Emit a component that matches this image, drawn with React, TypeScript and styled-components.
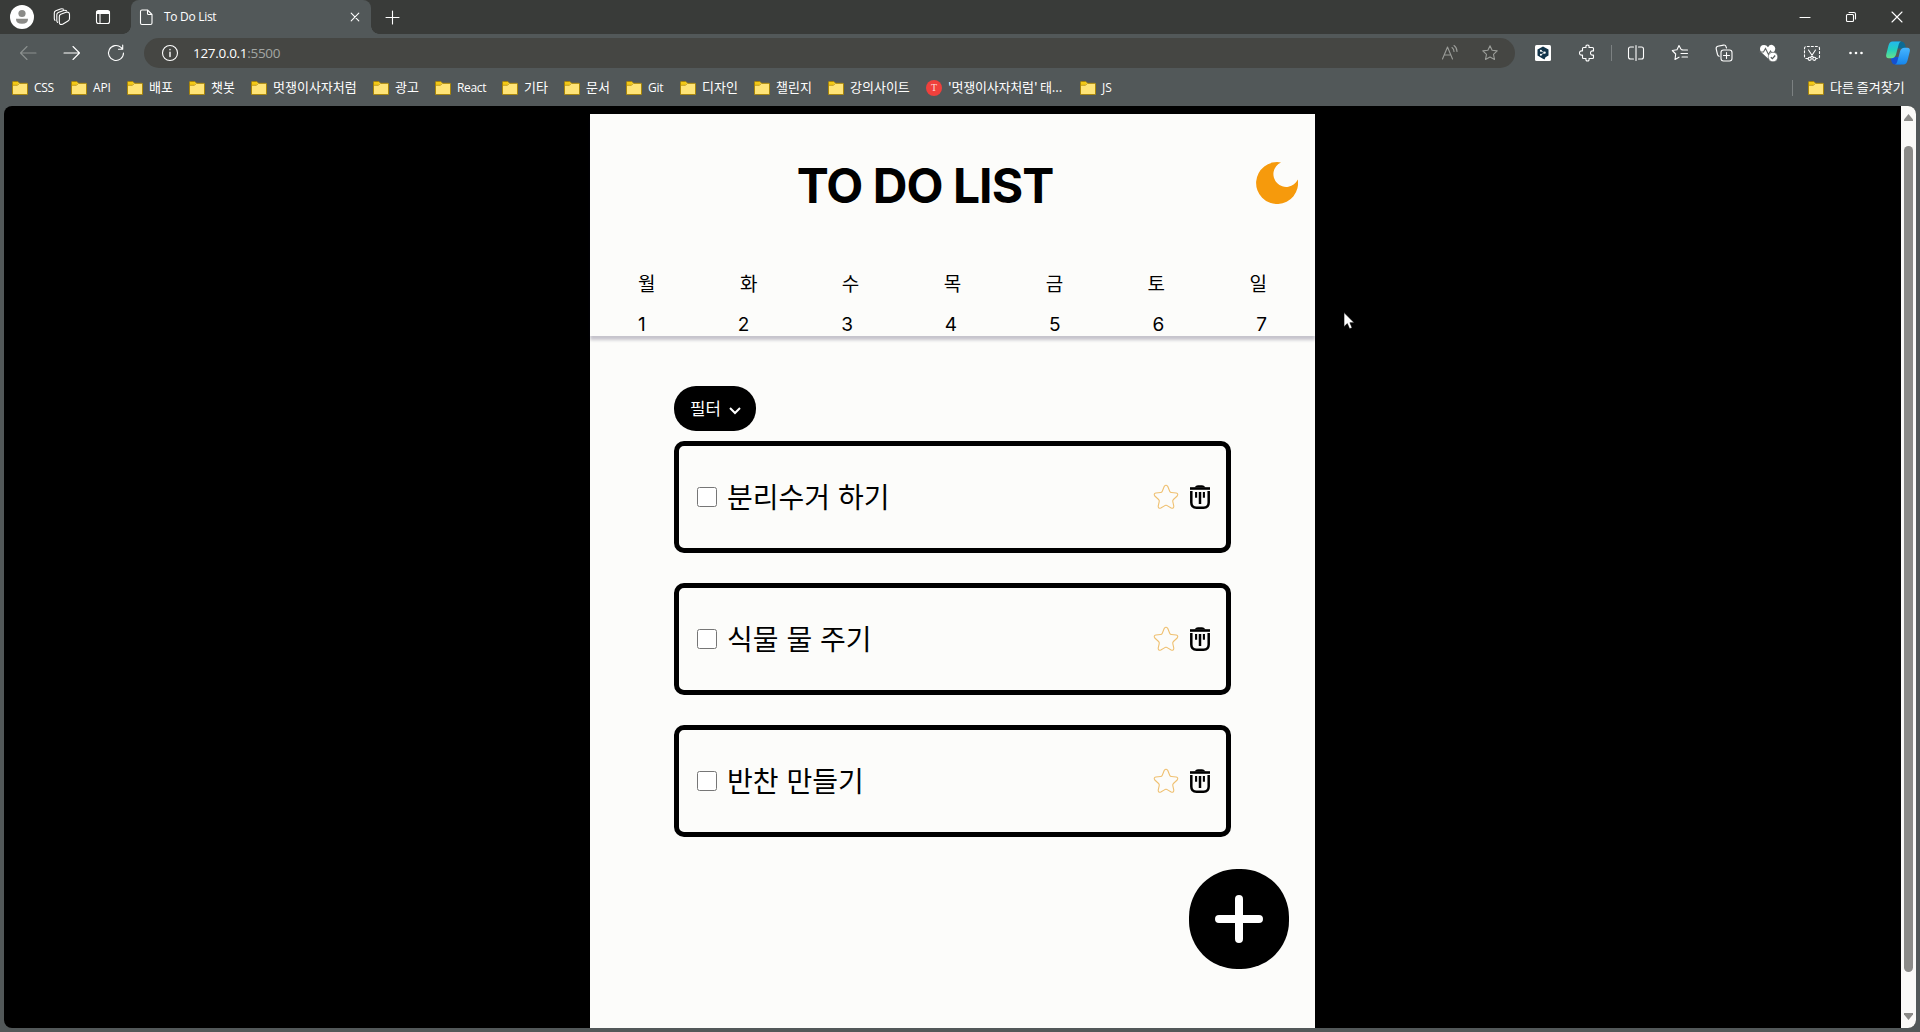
import React from "react";
import styled, { createGlobalStyle } from "styled-components";

const FRAME = "#525859";
const STRIP = "#393b39";
const UI_FONT = `"Open Sans", "Noto Sans CJK KR", sans-serif`;
const PAGE_FONT = `Inter, "Noto Sans CJK KR", sans-serif`;

const GlobalStyle = createGlobalStyle`
  *, *::before, *::after { box-sizing: border-box; }
  html, body, #root { height: 100%; margin: 0; }
  body { overflow: hidden; background: ${FRAME}; }
  ul { list-style: none; margin: 0; padding: 0; }
  button { font: inherit; border: 0; padding: 0; background: none; color: inherit; }
`;

/* ---------- browser frame ---------- */

const Browser = styled.div`
  display: flex;
  flex-direction: column;
  width: 1920px;
  height: 1032px;
  background: ${FRAME};
  color: #fff;
  font-family: ${UI_FONT};
`;

const TabStrip = styled.header`
  display: flex;
  flex: none;
  height: 34px;
  padding-left: 1px;
  background: ${STRIP};
`;

const Slot = styled.div<{ $w?: number }>`
  display: flex;
  flex: none;
  align-items: center;
  justify-content: center;
  width: ${(p) => p.$w ?? 44}px;
  height: 100%;
`;

const Spacer = styled.div`
  flex: 1;
`;

const Tab = styled.div`
  position: relative;
  display: flex;
  align-items: center;
  width: 240px;
  margin-left: 6px;
  padding: 0 11px 0 7px;
  border-radius: 8px 8px 0 0;
  background: ${FRAME};
  font-size: 12px;

  &::before,
  &::after {
    content: "";
    position: absolute;
    bottom: 0;
    width: 8px;
    height: 8px;
  }
  &::before {
    left: -8px;
    background: radial-gradient(circle at 0 0, transparent 7.5px, ${FRAME} 8px);
  }
  &::after {
    right: -8px;
    background: radial-gradient(circle at 100% 0, transparent 7.5px, ${FRAME} 8px);
  }
`;

const TabTitle = styled.span`
  flex: 1;
  margin-left: 9px;
  line-height: 16px;
  letter-spacing: -0.3px;
`;

const Icon = styled.svg<{ $s?: number; $c?: string }>`
  flex: none;
  display: block;
  width: ${(p) => p.$s ?? 18}px;
  height: ${(p) => p.$s ?? 18}px;
  fill: none;
  stroke: ${(p) => p.$c ?? "#fff"};
  stroke-width: 1.1;
  stroke-linecap: round;
  stroke-linejoin: round;
`;

const Toolbar = styled.div`
  display: flex;
  flex: none;
  align-items: center;
  height: 38px;
  padding-left: 6px;
`;

const AddressBar = styled.div`
  display: flex;
  align-items: center;
  width: 1371px;
  height: 30px;
  margin: 0 6px;
  padding: 0 16px 0 17px;
  border-radius: 15px;
  background: #454643;
`;

const Url = styled.span`
  flex: 1;
  margin-left: 14px;
  font-size: 13.5px;
  line-height: 18px;
  letter-spacing: -0.3px;
`;

const Port = styled.span`
  color: #a3a6a3;
`;

const AddressActions = styled.div`
  display: flex;
  gap: 22px;
`;

const Rule = styled.div`
  width: 1px;
  height: 16px;
  margin: 0 2px;
  background: #7c8182;
`;

const Bookmarks = styled.nav`
  display: flex;
  flex: none;
  align-items: center;
  height: 34px;
  padding: 0 15px 2px 12px;
`;

const Bookmark = styled.div<{ $w?: number }>`
  display: flex;
  align-items: center;
  gap: 6px;
  flex: none;
  width: ${(p) => (p.$w ? p.$w + "px" : "auto")};
  font-size: 12px;
  line-height: 16px;
  white-space: nowrap;
`;

const OtherBookmarks = styled(Bookmark)`
  margin: 0 -1px 0 13px;
`;

const BookmarkText = styled.span<{ $ko?: boolean; $track?: number }>`
  padding-bottom: ${(p) => (p.$ko ? 2 : 0)}px;
  font-family: ${(p) => (p.$ko ? `"Noto Sans CJK KR", sans-serif` : UI_FONT)};
  font-size: ${(p) => (p.$ko ? 13 : 12)}px;
  letter-spacing: ${(p) => p.$track ?? 0}px;
`;

const RedBadge = styled.span`
  display: grid;
  place-items: center;
  width: 16px;
  height: 16px;
  border-radius: 50%;
  background: #f0403c;
  color: #ffd9d6;
  font: 10px/1 "Liberation Serif", serif;
`;

/* ---------- viewport ---------- */

const Viewport = styled.div`
  display: flex;
  width: 1912px;
  height: 922px;
  margin-left: 4px;
  border-radius: 8px;
  overflow: hidden;
  background: #000;
`;

const Page = styled.main`
  display: flex;
  justify-content: center;
  width: 1897px;
  padding-top: 8px;
  font-family: ${PAGE_FONT};
`;

const Panel = styled.section`
  width: 725px;
  height: 914px;
  background: #fcfcfa;
  color: #000;
`;

const PanelHeader = styled.header`
  display: flex;
  flex-direction: column;
  height: 222px;
  box-shadow: 0 4px 3px rgba(20, 15, 50, 0.23);
`;

const TitleRow = styled.div`
  display: grid;
  flex: none;
  grid-template-columns: 1fr auto 1fr;
  align-items: center;
  height: 144px;
  padding: 0 17px 0 0;
`;

const Title = styled.h1`
  grid-column: 2;
  margin: 0 38px 0 0;
  font-size: 48px;
  font-weight: 700;
  line-height: 58px;
  letter-spacing: -0.95px;
  white-space: nowrap;
`;

const MoonButton = styled.button`
  justify-self: end;
  margin-top: -6px;
`;

const WeekRow = styled.div<{ $h: number }>`
  display: flex;
  flex: none;
  justify-content: space-between;
  align-items: center;
  height: ${(p) => p.$h}px;
  padding: 0 48px;
  font-size: 19px;
  line-height: 24px;
`;

const Content = styled.div`
  display: flex;
  flex-direction: column;
  align-items: flex-start;
  padding: 50px 84px 0;
`;

const FilterButton = styled.button`
  display: flex;
  align-items: center;
  gap: 8px;
  width: 82px;
  height: 45px;
  padding: 0 0 1px 16px;
  border-radius: 22px;
  background: #000;
  color: #fff;
  font-size: 16.8px;
`;

const Chevron = styled.svg`
  width: 12px;
  height: 8px;
  margin-top: 5px;
`;

const TodoList = styled.ul`
  display: flex;
  flex-direction: column;
  gap: 30px;
  margin-top: 10px;
`;

const TodoCard = styled.li`
  display: flex;
  align-items: center;
  width: 557px;
  height: 112px;
  padding: 0 16px 0 18px;
  border: 5px solid #000;
  border-radius: 10px;
`;

const Check = styled.input.attrs({ type: "checkbox" })`
  appearance: none;
  width: 20px;
  height: 20px;
  margin: 0 10px 0 0;
  border: 1px solid #767676;
  border-radius: 2.5px;
  background: #fff;
`;

const TodoText = styled.span`
  flex: 1;
  padding-top: 2px;
  font-size: 28px;
  line-height: 36px;
`;

const CardActions = styled.div`
  display: flex;
  align-items: center;
  gap: 11px;
`;

const AddRow = styled.div`
  display: flex;
  justify-content: flex-end;
  padding: 31px 26px 0 0;
`;

const AddButton = styled.button`
  display: grid;
  place-items: center;
  width: 100px;
  height: 100px;
  margin-top: 1px;
  border-radius: 48px;
  background: #000;
`;

const Scrollbar = styled.div`
  display: flex;
  flex-direction: column;
  align-items: center;
  width: 15px;
  padding: 8px 0;
  background: #fafaf8;
`;

const Thumb = styled.div`
  width: 9px;
  height: 826px;
  margin: 25px 0 41px;
  border-radius: 5px;
  background: #8b8b88;
`;

const Pointer = styled.svg`
  position: absolute;
  left: 1343px;
  top: 311px;
  width: 13px;
  height: 19px;
`;

/* ---------- drawings ---------- */

const Folder = () => (
  <svg width="16" height="14" viewBox="0 0 16 14">
    <path d="M.5 1.2Q.5.5 1.2.5h4.6L7.6 2.3h7.2q.7 0 .7.7v10q0 .6-.7.6H1.2q-.7 0-.7-.6z" fill="#ffe477" stroke="#a98508" />
    <path d="M1 1h4.600l1.200 1.400L5.300 4H1z" fill="#f3c915" />
    <path d="M1 4.300h4.500l1.700-1.700" fill="none" stroke="#b58e0a" strokeWidth=".8" />
  </svg>
);

const STAR = "M9 1.7 11.1 6.3 16.2 6.9 12.5 10.4 13.5 15.5 9 13 4.5 15.5 5.5 10.4 1.8 6.9 6.9 6.3z";

const TrashIcon = () => (
  <svg width="20" height="24" viewBox="0 0 20 24" fill="none" stroke="#000">
    <path d="M0 3.500h20" strokeWidth="2.600" />
    <path d="M4.500 2.600Q6 .2 8 .2h4q2 0 3.500 2.400z" fill="#000" stroke="none" />
    <path d="M1.300 6v11.500q0 5.200 5.200 5.200h7q5.200 0 5.200-5.200V6" strokeWidth="2.500" />
    <path d="M6.100 7v5.800M13.900 7v5.800" strokeWidth="2.100" />
    <path d="M10 7v12" strokeWidth="2.500" />
  </svg>
);

const TodoStar = () => (
  <svg width="26" height="26" viewBox="0 0 26 26" fill="none" stroke="#efc070" strokeWidth="1.100" strokeLinejoin="round">
    <path d="M11.3 2.3Q13 .2 14.7 2.3L16.7 7.2Q17.2 8.4 18.5 8.5L23.2 9Q25.7 9.8 24.2 12L20.4 15.5Q19.5 16.3 19.8 17.6L20.8 22.2Q20.8 24.8 18.2 24L14.1 21.6Q13 21 11.9 21.6L7.8 24Q5.2 24.8 5.2 22.2L6.2 17.6Q6.5 16.3 5.6 15.5L1.8 12Q.3 9.8 2.8 9L7.5 8.5Q8.8 8.4 9.3 7.2z" />
  </svg>
);

const ProfileIcon = () => (
  <svg width="24" height="24" viewBox="0 0 24 24">
    <circle cx="12" cy="12" r="12" fill="#fff" />
    <circle cx="12" cy="8.5" r="3.6" fill="#8b8b88" />
    <path d="M6 13.800h12q.3 5-6 5t-6-5z" fill="#8b8b88" />
  </svg>
);

const Copilot = () => (
  <svg width="26" height="26" viewBox="0 0 26 26">
    <defs>
      <linearGradient id="cpl" x1="0" y1="0" x2="0" y2="1">
        <stop offset="0" stopColor="#22b8f0" />
        <stop offset=".5" stopColor="#23d0bd" />
        <stop offset="1" stopColor="#6ae08a" />
      </linearGradient>
      <linearGradient id="cpr" x1="0" y1="0" x2="0" y2="1">
        <stop offset="0" stopColor="#46b5ff" />
        <stop offset="1" stopColor="#1686ec" />
      </linearGradient>
    </defs>
    <path d="M10 1.500h6.500q2.600 0 3.400 2.800L21 8.500h-8z" fill="#0c6a94" />
    <path d="M16 24.500H10q-2.600 0-3.300-2.600L5.500 17h8z" fill="#1550d0" />
    <path d="M7.500 1.500H16q-1.800.6-2.300 3L11 14.500Q10 18.200 6.500 18.200H3.700Q.5 18.200 1.200 14.500L3.500 5.500Q4.500 1.500 7.500 1.500z" fill="url(#cpl)" />
    <path d="M18.500 24.500H10q1.800-.6 2.300-3L15 11.500Q16 7.800 19.500 7.800h2.800q3.200 0 2.500 3.700L22.500 20.500Q21.500 24.500 18.500 24.500z" fill="url(#cpr)" />
  </svg>
);

const folders: { name: string; w: number; ko?: boolean; track?: number }[] = [
  { name: "CSS", w: 59, track: -0.3 },
  { name: "API", w: 56, track: -0.1 },
  { name: "배포", w: 62, ko: true },
  { name: "챗봇", w: 62, ko: true },
  { name: "멋쟁이사자처럼", w: 122, ko: true },
  { name: "광고", w: 62, ko: true },
  { name: "React", w: 67, track: -0.35 },
  { name: "기타", w: 62, ko: true },
  { name: "문서", w: 62, ko: true },
  { name: "Git", w: 54, track: -0.2 },
  { name: "디자인", w: 74, ko: true },
  { name: "챌린지", w: 74, ko: true },
  { name: "강의사이트", w: 98, ko: true },
];

const days = ["월", "화", "수", "목", "금", "토", "일"];
const todos = ["분리수거 하기", "식물 물 주기", "반찬 만들기"];

export default function App() {
  return (
    <Browser>
      <GlobalStyle />
      <TabStrip>
        <Slot $w={42}><ProfileIcon /></Slot>
        <Slot $w={38}>
          <Icon viewBox="0 0 18 18">
            <path d="M7.800 6.300 13 4.300Q16.500 3.500 16.500 6.500V10.500Q16.500 12.300 15 13L10 16Q6.500 17.500 6.300 14.500V8.500Q6.300 7 7.800 6.300z" />
            <path d="M4.500 14.300Q3.800 13.500 3.800 12.500V6.800Q3.800 5.200 5.300 4.500L10.500 2.500Q12.500 2 13.500 2.800M2 12.300Q1.300 11.500 1.300 10.500V5Q1.300 3.500 2.800 2.800L7.500 1Q9.500.5 10.500 1.200" />
          </Icon>
        </Slot>
        <Slot $w={44}>
          <Icon $s={16} viewBox="0 0 16 16">
            <rect x="1.500" y="1.500" width="13" height="13" rx="2" />
            <path d="M5 4v10" />
            <path d="M2 2.500h12v2H2z" fill="#fff" />
          </Icon>
        </Slot>
        <Tab>
          <Icon $s={17} viewBox="0 0 17 17">
            <path d="M4 1h5.500L14 5.500V14q0 1.500-1.500 1.500H4Q2.500 15.500 2.500 14V2.500Q2.500 1 4 1zM9.500 1v3.500q0 1 1 1H14" />
          </Icon>
          <TabTitle>To Do List</TabTitle>
          <Icon $s={10} viewBox="0 0 10 10"><path d="M1.200 1.200 8.800 8.800M8.800 1.200 1.200 8.800" /></Icon>
        </Tab>
        <Slot $w={43}>
          <Icon $s={15} viewBox="0 0 15 15"><path d="M7.500 1v13M1 7.500h13" /></Icon>
        </Slot>
        <Spacer />
        <Slot $w={46}><Icon $s={12} viewBox="0 0 12 12"><path d="M1 6.500h10" /></Icon></Slot>
        <Slot $w={46}>
          <Icon $s={12} viewBox="0 0 12 12">
            <rect x="1.500" y="3.500" width="7" height="7" rx="1" />
            <path d="M4 1.500h5q1.500 0 1.500 1.500v5" />
          </Icon>
        </Slot>
        <Slot $w={46}><Icon $s={12} viewBox="0 0 12 12"><path d="m1 1 10 10M11 1 1 11" /></Icon></Slot>
      </TabStrip>

      <Toolbar>
        <Slot><Icon $c="#8b908f" viewBox="0 0 18 18"><path d="M17 9H1.500M8 2.500 1.500 9 8 15.500" /></Icon></Slot>
        <Slot><Icon viewBox="0 0 18 18"><path d="M1 9h15.500M10 2.500 16.500 9 10 15.500" /></Icon></Slot>
        <Slot><Icon viewBox="0 0 18 18"><path d="M16.500 9A7.500 7.500 0 1 1 14 3.400L15.500 5M15.700 1v4.200h-4.200" /></Icon></Slot>
        <AddressBar>
          <Icon viewBox="0 0 18 18">
            <circle cx="9" cy="9" r="7.500" />
            <path d="M9 8.200V12.500M9 5.500v.2" strokeWidth="1.400" />
          </Icon>
          <Url>127.0.0.1<Port>:5500</Port></Url>
          <AddressActions>
            <Icon $c="#9a9c98" viewBox="0 0 18 18">
              <path d="M1.500 15 6.500 3l5 12M3.300 11h6.400M11 3.500q2 1.500 2 4M13 1.500q3 2 3 6" />
            </Icon>
            <Icon $c="#9a9c98" viewBox="0 0 18 18"><path d={STAR} /></Icon>
          </AddressActions>
        </AddressBar>
        <Slot>
          <svg width="16" height="16" viewBox="0 0 16 16">
            <rect width="16" height="16" rx="1.500" fill="#fff" />
            <path d="M8 1.500 13.500 4.500v6L10.500 12.300 9.500 14.500 7.500 13.400 2.500 10.500v-6z" fill="#12344a" />
            <path d="M5.800 5.800 9.500 7.700 5.800 9.800" fill="none" stroke="#fff" strokeWidth=".7" />
            <g fill="#fff"><circle cx="5.900" cy="5.700" r="1" /><circle cx="9.700" cy="7.700" r="1.100" /><circle cx="5.900" cy="9.800" r="1" /></g>
          </svg>
        </Slot>
        <Slot>
          <Icon viewBox="0 0 18 18">
            <path d="M5.500 3.500H8Q7.500 1 9.500 1T11 3.500h3.500q1 0 1 1V7q-3-.5-3 2t3 2v2.500q0 1-1 1H11Q11.500 17 9.500 17T8 14.500H5.500q-1 0-1-1V11Q1.500 11.500 1.500 9t3-2V4.500q0-1 1-1z" />
          </Icon>
        </Slot>
        <Rule />
        <Slot>
          <Icon viewBox="0 0 18 18">
            <path d="M9 1.500v15M6.500 3H3.500Q1.500 3 1.500 5v8q0 2 2 2h3M11.500 3h3q2 0 2 2v8q0 2-2 2h-3" />
          </Icon>
        </Slot>
        <Slot>
          <Icon viewBox="0 0 18 18">
            <path d="M11 5.500 10 5.300 8 1.500 6 5.800 1.300 6.500 4.700 10 4 15.500 8 13.200M11 6h5.500M10 9.500h6.500M11 13h5.500" />
          </Icon>
        </Slot>
        <Slot>
          <Icon viewBox="0 0 18 18">
            <rect x="6" y="6" width="11" height="11" rx="2.500" />
            <path d="M11.500 8.500v6M8.500 11.500h6M4.200 12.300Q3 12 2.500 10.500L1.200 5Q.8 3 2.800 2.300L8.500 1.100Q10.500.8 11 2.500L11.500 4" />
          </Icon>
        </Slot>
        <Slot>
          <svg width="19" height="18" viewBox="0 0 19 18">
            <path d="M9 3.200Q11-.2 14 1.200q4 2.300 1 6.800l-6 6.500L2 8Q-.5 3.500 3 1.300 7 0 9 3.200z" fill="#fff" />
            <path d="M0 8h4.500L6.500 4.500l3 6L11.500 7l1 1.500H17" fill="none" stroke="#606564" strokeWidth="1.100" />
            <circle cx="14" cy="13" r="4.800" fill="#fff" stroke="#525859" strokeWidth=".6" />
            <path d="m11.800 13.200 1.600 1.500 2.800-3.200" fill="none" stroke="#525859" strokeWidth="1.200" />
          </svg>
        </Slot>
        <Slot>
          <Icon viewBox="0 0 18 18">
            <path d="M5 14.500H3.500q-2 0-2-2V4.500q0-2 2-2h11q2 0 2 2v8q0 2-2 2H13.500" strokeDasharray="2 2" />
            <path d="m5.500 6 5 7.500M12.500 6l-5 7.500" />
            <circle cx="6.700" cy="14.800" r="1.600" /><circle cx="11.300" cy="14.800" r="1.600" />
          </Icon>
        </Slot>
        <Slot>
          <Icon viewBox="0 0 18 18" $c="none">
            <g fill="#fff"><circle cx="3.500" cy="9" r="1.300" /><circle cx="9" cy="9" r="1.300" /><circle cx="14.500" cy="9" r="1.300" /></g>
          </Icon>
        </Slot>
        <Slot $w={40}><Copilot /></Slot>
      </Toolbar>

      <Bookmarks>
        {folders.map((f) => (
          <Bookmark key={f.name} $w={f.w}>
            <Folder />
            <BookmarkText $ko={f.ko} $track={f.track}>{f.name}</BookmarkText>
          </Bookmark>
        ))}
        <Bookmark $w={154}>
          <RedBadge>T</RedBadge>
          <BookmarkText $ko $track={-0.18}>'멋쟁이사자처럼' 태...</BookmarkText>
        </Bookmark>
        <Bookmark><Folder /><BookmarkText>JS</BookmarkText></Bookmark>
        <Spacer />
        <Rule />
        <OtherBookmarks $w={98}>
          <Folder />
          <BookmarkText $ko>다른 즐겨찾기</BookmarkText>
        </OtherBookmarks>
      </Bookmarks>

      <Viewport>
        <Page>
          <Panel>
            <PanelHeader>
              <TitleRow>
                <Title>TO DO LIST</Title>
                <MoonButton aria-label="테마">
                  <svg width="42" height="42" viewBox="0 0 42 42" display="block">
                    <path d="M25 .4A21 21 0 1 0 41.800 17.500A12.800 12.800 0 1 1 25 .4z" fill="#f69a0c" />
                  </svg>
                </MoonButton>
              </TitleRow>
              <WeekRow $h={54}>{days.map((d) => <span key={d}>{d}</span>)}</WeekRow>
              <WeekRow $h={26}>{days.map((d, i) => <span key={d}>{i + 1}</span>)}</WeekRow>
            </PanelHeader>
            <Content>
              <FilterButton>
                필터
                <Chevron viewBox="0 0 12 8" fill="none" stroke="#fff" strokeWidth="2">
                  <path d="m1 1 5 5 5-5" />
                </Chevron>
              </FilterButton>
              <TodoList>
                {todos.map((t) => (
                  <TodoCard key={t}>
                    <Check />
                    <TodoText>{t}</TodoText>
                    <CardActions><TodoStar /><TrashIcon /></CardActions>
                  </TodoCard>
                ))}
              </TodoList>
            </Content>
            <AddRow>
              <AddButton aria-label="추가">
                <svg width="48" height="48" viewBox="0 0 48 48" stroke="#fff" strokeWidth="8" strokeLinecap="round">
                  <path d="M24 4v40M4 24h40" />
                </svg>
              </AddButton>
            </AddRow>
          </Panel>
        </Page>
        <Scrollbar>
          <svg width="9" height="7" viewBox="0 0 9 7"><path d="M4.500 0 9 5.500V7H0V5.500z" fill="#8b8b88" /></svg>
          <Thumb />
          <svg width="9" height="7" viewBox="0 0 9 7"><path d="M4.500 7 9 1.500V0H0v1.500z" fill="#8b8b88" /></svg>
        </Scrollbar>
      </Viewport>
      <Pointer viewBox="0 0 13 19">
        <path d="M1 1.500v14.200l3.300-3.100 2.300 5.200 2.500-1.100-2.200-5h4.300z" fill="#fff" stroke="#000" strokeWidth=".6" />
      </Pointer>
    </Browser>
  );
}
